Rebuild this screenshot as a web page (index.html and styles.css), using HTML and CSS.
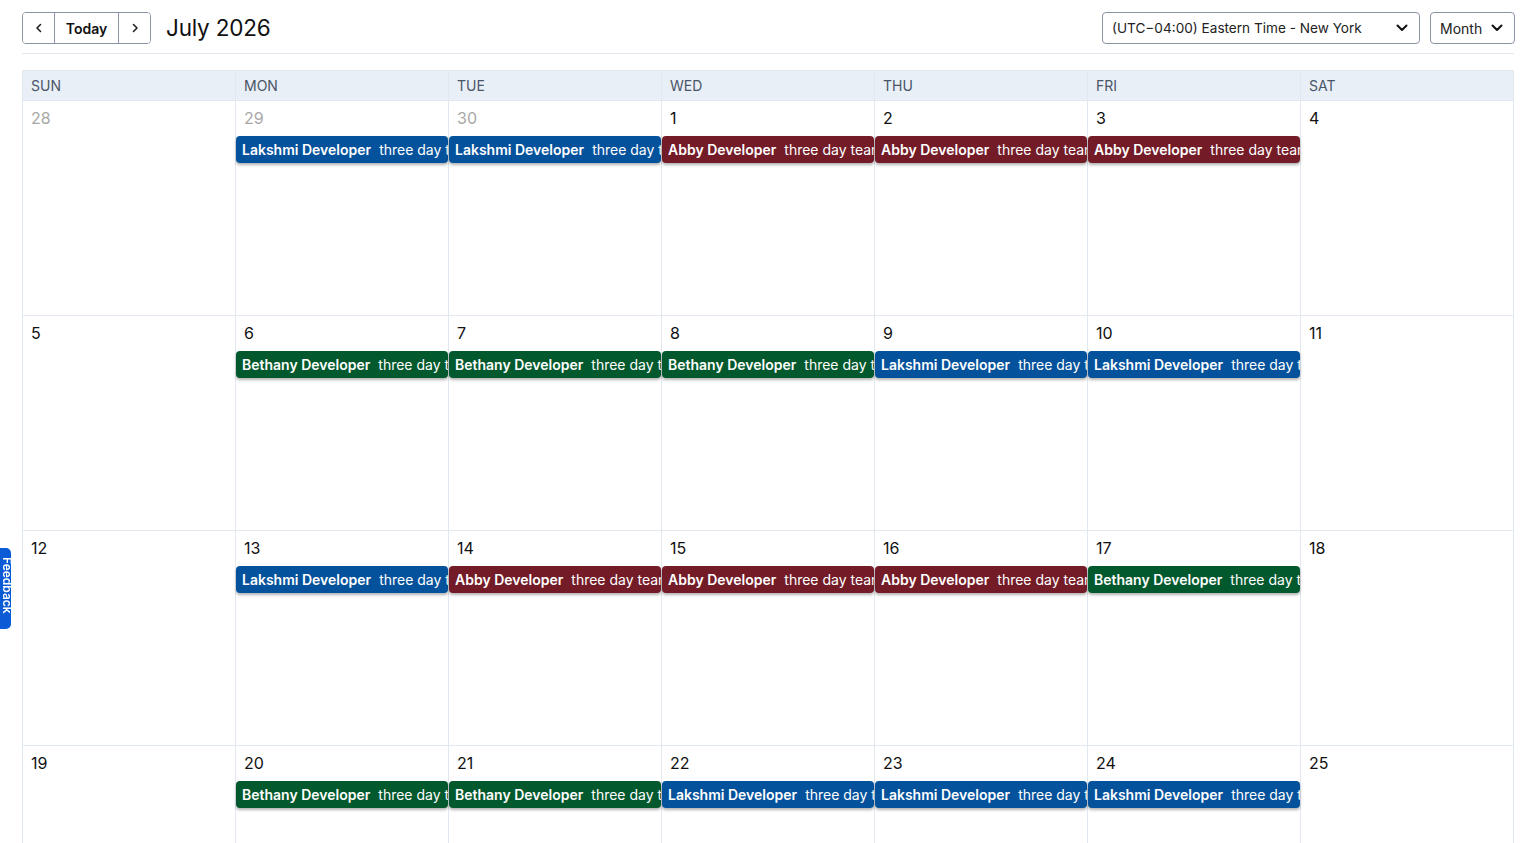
FILE: index.html
```html
<!DOCTYPE html>
<html lang="en">
<head>
  <meta charset="UTF-8">
  <title>Team Calendar</title>
  <link rel="stylesheet" href="styles.css">
</head>
<body>
  <div class="page">
    <div class="toolbar">
      <div class="nav-group">
        <button class="nav-btn" aria-label="Previous">
          <svg width="10" height="10" viewBox="0 0 10 10"><path d="M6.5 1.5 3 5l3.5 3.5" fill="none" stroke="#222" stroke-width="1.6" stroke-linecap="round" stroke-linejoin="round"/></svg>
        </button>
        <button class="nav-btn today">Today</button>
        <button class="nav-btn" aria-label="Next">
          <svg width="10" height="10" viewBox="0 0 10 10"><path d="M3.5 1.5 7 5 3.5 8.5" fill="none" stroke="#222" stroke-width="1.6" stroke-linecap="round" stroke-linejoin="round"/></svg>
        </button>
      </div>
      <h1 class="title">July 2026</h1>
      <div class="spacer"></div>
      <div class="select tz">
        <span>(UTC−04:00) Eastern Time - New York</span>
        <svg width="14" height="14" viewBox="0 0 14 14"><path d="M2.5 4.5 7 9l4.5-4.5" fill="none" stroke="#111" stroke-width="2" stroke-linecap="round" stroke-linejoin="round"/></svg>
      </div>
      <div class="select view">
        <span>Month</span>
        <svg width="14" height="14" viewBox="0 0 14 14"><path d="M2.5 4.5 7 9l4.5-4.5" fill="none" stroke="#111" stroke-width="2" stroke-linecap="round" stroke-linejoin="round"/></svg>
      </div>
    </div>

    <div class="calendar">
      <div class="dow">SUN</div>
      <div class="dow">MON</div>
      <div class="dow">TUE</div>
      <div class="dow">WED</div>
      <div class="dow">THU</div>
      <div class="dow">FRI</div>
      <div class="dow">SAT</div>

      <!-- week 1 -->
      <div class="day other"><span class="num">28</span></div>
      <div class="day other"><span class="num">29</span><div class="event blue"><b>Lakshmi Developer</b><span>three day team meeting</span></div></div>
      <div class="day other"><span class="num">30</span><div class="event blue"><b>Lakshmi Developer</b><span>three day team meeting</span></div></div>
      <div class="day"><span class="num">1</span><div class="event red"><b>Abby Developer</b><span>three day team meeting</span></div></div>
      <div class="day"><span class="num">2</span><div class="event red"><b>Abby Developer</b><span>three day team meeting</span></div></div>
      <div class="day"><span class="num">3</span><div class="event red"><b>Abby Developer</b><span>three day team meeting</span></div></div>
      <div class="day"><span class="num">4</span></div>

      <!-- week 2 -->
      <div class="day"><span class="num">5</span></div>
      <div class="day"><span class="num">6</span><div class="event green"><b>Bethany Developer</b><span>three day team meeting</span></div></div>
      <div class="day"><span class="num">7</span><div class="event green"><b>Bethany Developer</b><span>three day team meeting</span></div></div>
      <div class="day"><span class="num">8</span><div class="event green"><b>Bethany Developer</b><span>three day team meeting</span></div></div>
      <div class="day"><span class="num">9</span><div class="event blue"><b>Lakshmi Developer</b><span>three day team meeting</span></div></div>
      <div class="day"><span class="num">10</span><div class="event blue"><b>Lakshmi Developer</b><span>three day team meeting</span></div></div>
      <div class="day"><span class="num">11</span></div>

      <!-- week 3 -->
      <div class="day"><span class="num">12</span></div>
      <div class="day"><span class="num">13</span><div class="event blue"><b>Lakshmi Developer</b><span>three day team meeting</span></div></div>
      <div class="day"><span class="num">14</span><div class="event red"><b>Abby Developer</b><span>three day team meeting</span></div></div>
      <div class="day"><span class="num">15</span><div class="event red"><b>Abby Developer</b><span>three day team meeting</span></div></div>
      <div class="day"><span class="num">16</span><div class="event red"><b>Abby Developer</b><span>three day team meeting</span></div></div>
      <div class="day"><span class="num">17</span><div class="event green"><b>Bethany Developer</b><span>three day team meeting</span></div></div>
      <div class="day"><span class="num">18</span></div>

      <!-- week 4 -->
      <div class="day"><span class="num">19</span></div>
      <div class="day"><span class="num">20</span><div class="event green"><b>Bethany Developer</b><span>three day team meeting</span></div></div>
      <div class="day"><span class="num">21</span><div class="event green"><b>Bethany Developer</b><span>three day team meeting</span></div></div>
      <div class="day"><span class="num">22</span><div class="event blue"><b>Lakshmi Developer</b><span>three day team meeting</span></div></div>
      <div class="day"><span class="num">23</span><div class="event blue"><b>Lakshmi Developer</b><span>three day team meeting</span></div></div>
      <div class="day"><span class="num">24</span><div class="event blue"><b>Lakshmi Developer</b><span>three day team meeting</span></div></div>
      <div class="day"><span class="num">25</span></div>

      <!-- week 5 -->
      <div class="day"><span class="num">26</span></div>
      <div class="day"><span class="num">27</span><div class="event red"><b>Abby Developer</b><span>three day team meeting</span></div></div>
      <div class="day"><span class="num">28</span><div class="event red"><b>Abby Developer</b><span>three day team meeting</span></div></div>
      <div class="day"><span class="num">29</span><div class="event red"><b>Abby Developer</b><span>three day team meeting</span></div></div>
      <div class="day"><span class="num">30</span><div class="event green"><b>Bethany Developer</b><span>three day team meeting</span></div></div>
      <div class="day"><span class="num">31</span><div class="event green"><b>Bethany Developer</b><span>three day team meeting</span></div></div>
      <div class="day other"><span class="num">1</span></div>
    </div>
  </div>

  <div class="feedback">Feedback</div>
</body>
</html>
```

FILE: styles.css
```css
html {
  overflow: hidden;
}

body {
  margin: 0;
  font-family: Inter, 'Noto Sans', sans-serif;
  color: #111;
  background: #fff;
}

.page {
  padding: 12px 8px 0 22px;
}

.toolbar {
  display: flex;
  align-items: center;
  height: 32px;
  padding-bottom: 9px;
  border-bottom: 1px solid #e2e8f0;
}

.nav-group {
  display: flex;
  height: 32px;
  border: 1px solid #8a94a6;
  border-radius: 4px;
  overflow: hidden;
  box-sizing: border-box;
}

.nav-btn {
  display: flex;
  align-items: center;
  justify-content: center;
  width: 31px;
  padding: 0;
  border: none;
  background: #fff;
  font-family: inherit;
  font-size: 14px;
  font-weight: 600;
  color: #111;
}

.nav-btn.today {
  width: 65px;
  border-left: 1px solid #8a94a6;
  border-right: 1px solid #8a94a6;
}

.title {
  margin: 0 0 0 15px;
  font-size: 22.5px;
  font-weight: 400;
  line-height: 32px;
  letter-spacing: -0.2px;
}

.spacer {
  flex: 1;
}

.select {
  display: flex;
  align-items: center;
  justify-content: space-between;
  height: 32px;
  box-sizing: border-box;
  border: 1px solid #8a94a6;
  border-radius: 4px;
  padding: 0 10px 0 9px;
  font-size: 14px;
  color: #222;
}

.select.tz {
  width: 318px;
  font-size: 13.6px;
}

.select.view {
  width: 85px;
  margin-left: 10px;
  margin-right: -1px;
}

.calendar {
  display: grid;
  grid-template-columns: repeat(7, 1fr);
  grid-template-rows: 30px;
  grid-auto-rows: 215px;
  margin-top: 16px;
  border-left: 1px solid #e2e8f0;
  border-top: 1px solid #e2e8f0;
}

.dow {
  display: flex;
  align-items: center;
  padding-left: 8px;
  background: #e9eff7;
  border-right: 1px solid #e2e8f0;
  border-bottom: 1px solid #e2e8f0;
  font-size: 14px;
  color: #4a5568;
}

.day {
  display: flex;
  flex-direction: column;
  min-width: 0;
  padding-top: 5px;
  border-right: 1px solid #e2e8f0;
  border-bottom: 1px solid #e2e8f0;
}

.num {
  padding-left: 8px;
  font-size: 16px;
  line-height: 24px;
}

.other .num {
  color: #a8a8a8;
}

.event {
  display: flex;
  align-items: center;
  height: 27px;
  margin-top: 6px;
  padding-left: 6px;
  border-radius: 4px;
  box-shadow: 0 2px 3px rgba(0, 0, 0, 0.3);
  white-space: nowrap;
  overflow: hidden;
  font-size: 14px;
  color: #fff;
}

.event b {
  font-weight: 600;
  margin-right: 8px;
}

.blue {
  background: #04529c;
}

.red {
  background: #731b27;
}

.green {
  background: #03592e;
}

.feedback {
  position: fixed;
  left: 0;
  top: 548px;
  width: 11px;
  height: 81px;
  box-sizing: border-box;
  padding-top: 9px;
  background: #0b5bd6;
  border-radius: 0 5px 5px 0;
  color: #fff;
  font-size: 12px;
  font-weight: 600;
  writing-mode: vertical-rl;
  overflow: hidden;
  line-height: 8px;
}
```
